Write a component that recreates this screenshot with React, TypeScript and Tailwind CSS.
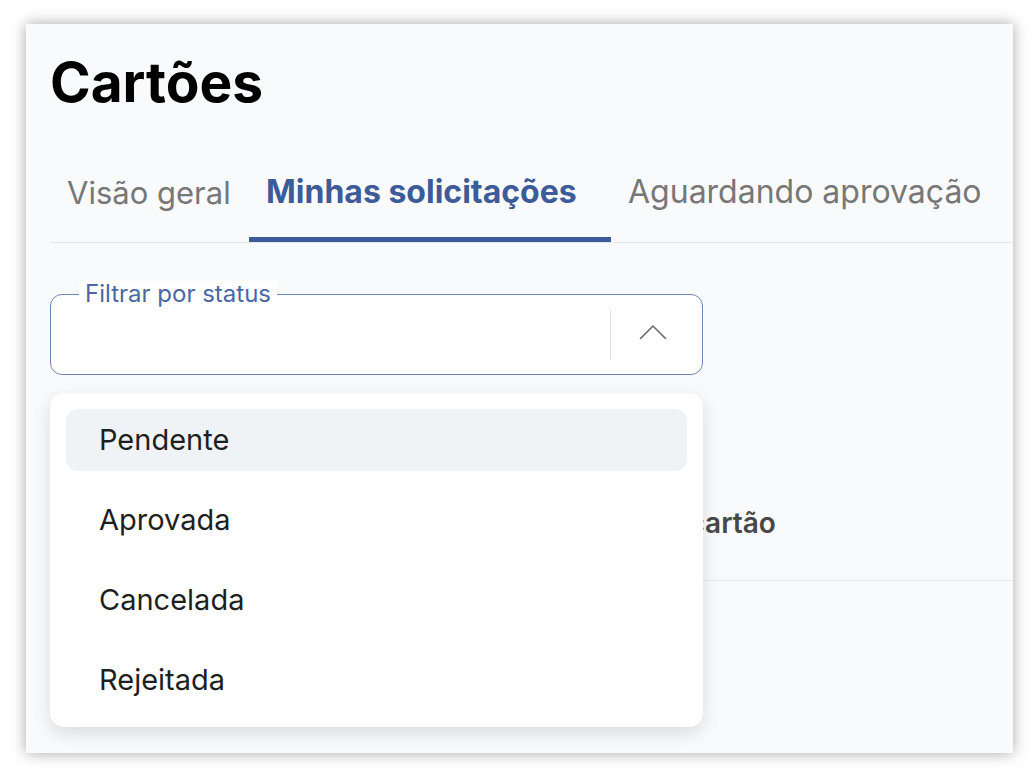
import React from 'react'

const statusOptions = ['Pendente', 'Aprovada', 'Cancelada', 'Rejeitada']

const ChevronUp: React.FC = () => (
  <svg width="28" height="16" viewBox="0 0 28 16" fill="none">
    <polyline points="1.5,14.5 14,2 26.5,14.5" stroke="#6b6b6b" strokeWidth="1.6" strokeLinecap="round" strokeLinejoin="round" />
  </svg>
)

const App: React.FC = () => {
  return (
    <div className="min-h-screen w-full bg-white pl-[26px] pt-[24px] font-['Inter',sans-serif]">
      <div className="h-[729px] w-[987px] overflow-hidden bg-[#f9fafc] shadow-[0_0_14px_rgba(0,0,0,0.35)]">
        <div className="pl-6 pt-[31px]">
          <h1 className="text-[55px] font-bold leading-none text-black">Cartões</h1>

          {/* tabs */}
          <div className="mt-[32px] flex border-b border-[#e4e7eb]">
            <div className="flex h-[100px] w-[199px] items-center pl-[17px] text-[31px] leading-none text-[#777777]">
              Visão geral
            </div>
            <div className="flex h-[100px] w-[362px] items-center border-b-[5px] border-[#3d5b99] pl-[17px] pt-[5px] text-[32px] font-bold leading-none text-[#3d5b99]">
              Minhas solicitações
            </div>
            <div className="flex h-[100px] shrink-0 items-center whitespace-nowrap pl-[17px] text-[32px] leading-none text-[#777777]">
              Aguardando aprovação
            </div>
          </div>

          <div className="relative pt-[51px]">
            {/* status filter */}
            <div className="relative flex h-[81px] w-[653px] items-center justify-end rounded-[12px] border border-[#6f84b8] bg-white">
              <span className="absolute left-[28px] top-[-14px] bg-white px-[6px] text-[24px] leading-[26px] text-[#4a68a6]">
                Filtrar por status
              </span>
              <div className="h-[50px] w-px bg-[#e3e3e3]" />
              <div className="flex w-[91px] items-center pl-[28px] pb-[6px]">
                <ChevronUp />
              </div>
            </div>

            {/* table header */}
            <div className="mt-[90px] flex h-[116px] items-center border-b border-[#e4e7eb] pl-[530px] text-[28px] font-semibold text-[#474747]">
              Tipo de cartão
            </div>
            <div className="h-[200px]" />

            {/* dropdown menu */}
            <div className="absolute left-0 top-[150px] flex w-[653px] flex-col gap-[18px] rounded-[14px] bg-white p-4 shadow-[0_6px_18px_rgba(0,0,0,0.13)]">
              {statusOptions.map((opt, i) => (
                <div
                  key={opt}
                  className={`flex h-[62px] items-center rounded-[12px] pl-[33px] text-[29px] text-[#1f1f1f] ${i === 0 ? 'bg-[#eff3f6]' : ''}`}
                >
                  {opt}
                </div>
              ))}
            </div>
          </div>
        </div>
      </div>
    </div>
  )
}

export default App
